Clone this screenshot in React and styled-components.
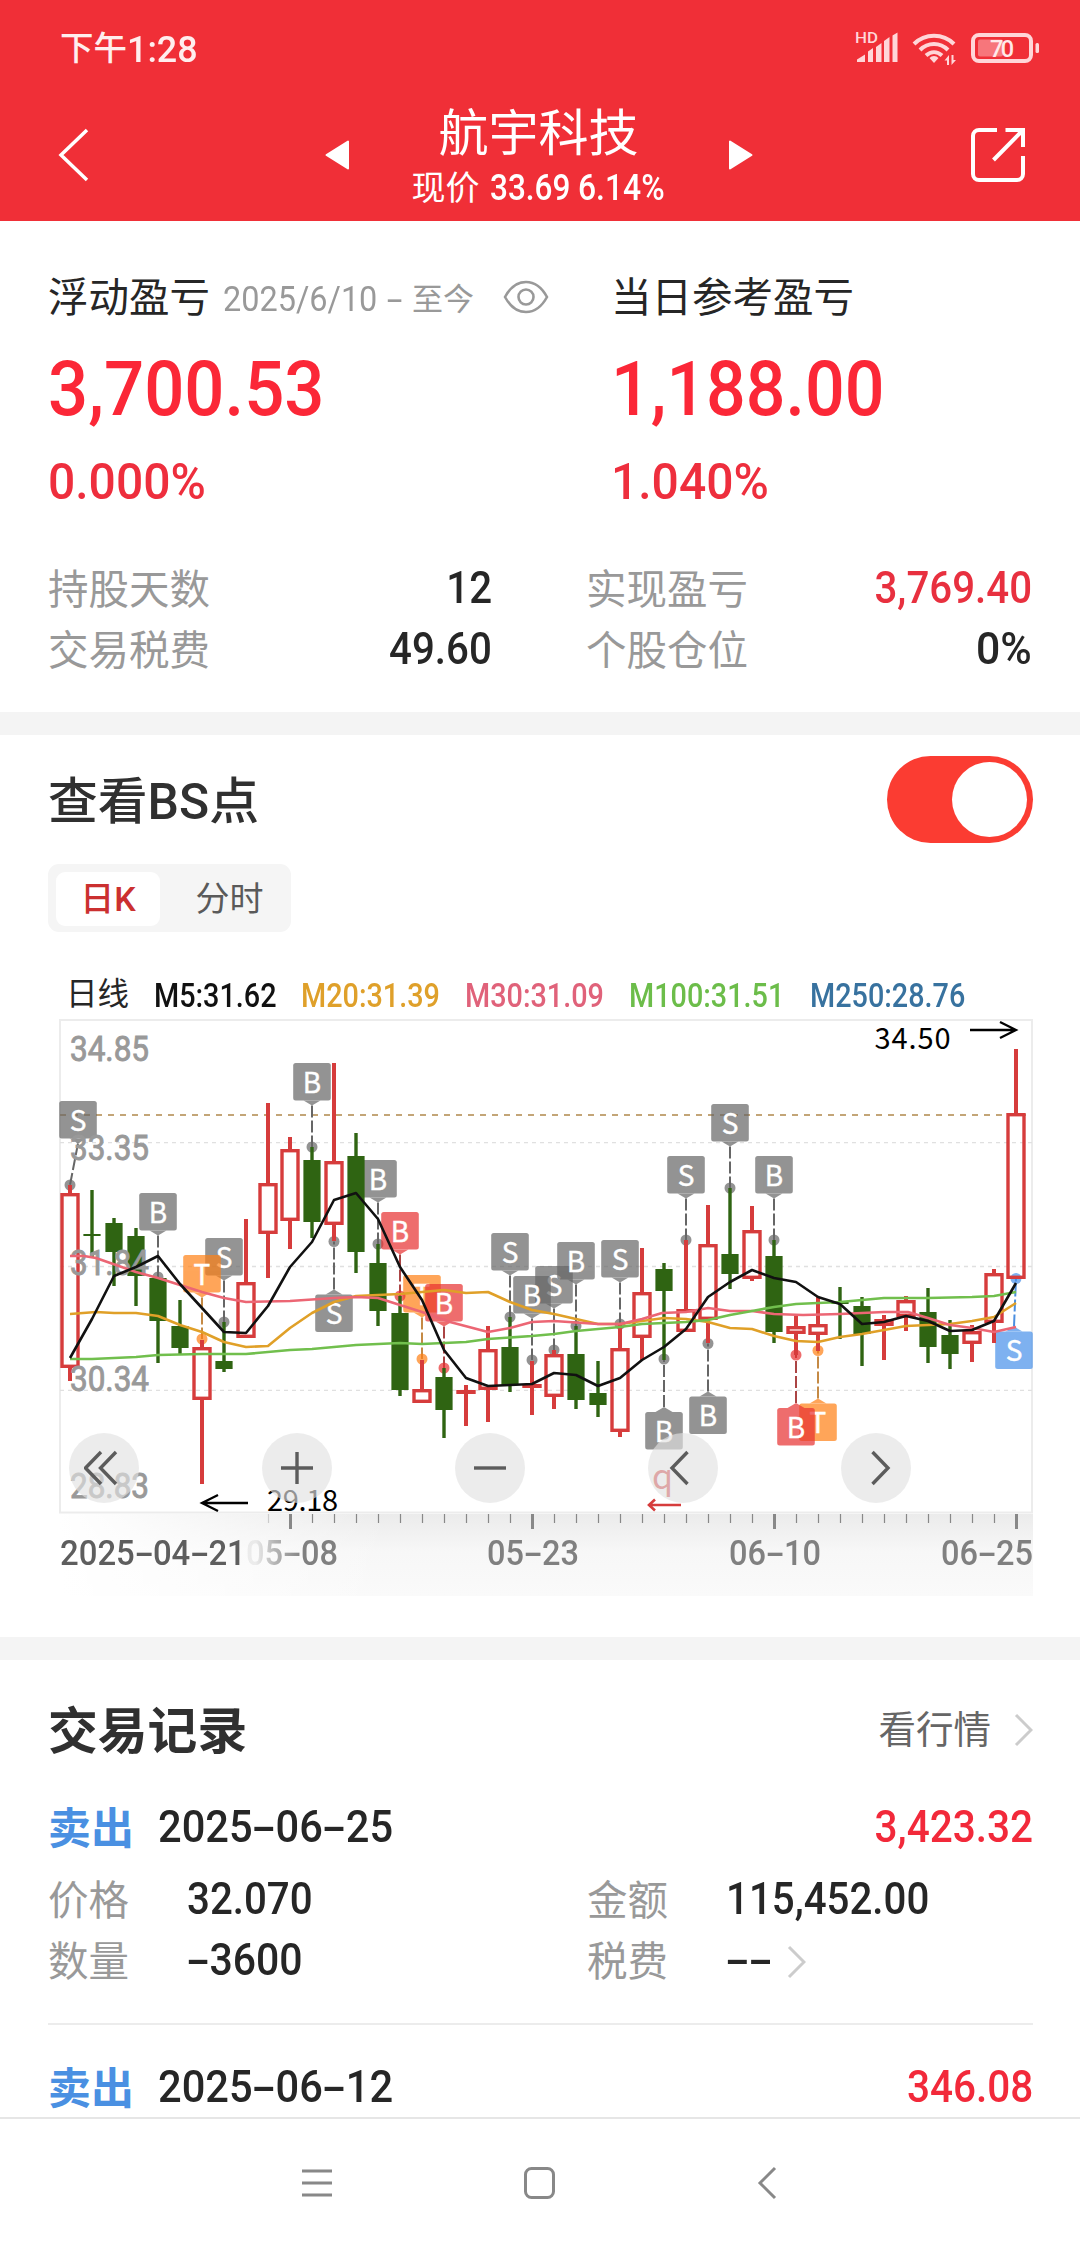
import React from "react";
import styled, { createGlobalStyle, css } from "styled-components";

const GlobalStyle = createGlobalStyle`
  *, *::before, *::after { box-sizing: border-box; }
  body {
    margin: 0;
    background: #fff;
    font-family: Roboto, "Noto Sans CJK SC", sans-serif;
    color: #262626;
  }
  button { border: 0; padding: 0; margin: 0; background: none; font: inherit; color: inherit; display: block; }
`;

const RED = "#f02f37";
const UP = "#d63c3c";
const DOWN = "#2f6412";

const Page = styled.div`
  width: 1080px;
  height: 2248px;
  display: flex;
  flex-direction: column;
  overflow: hidden;
  background: #fff;
`;

/* ---------- shared text ---------- */

const Num = styled.span`
  display: inline-block;
  font-family: Roboto, sans-serif;
  font-size: ${(p) => p.$size || 45}px;
  font-weight: ${(p) => p.$weight || 500};
  line-height: 1;
  white-space: nowrap;
  color: ${(p) => p.$color || "inherit"};
  transform: scaleX(${(p) => p.$sx || 0.895});
  transform-origin: ${(p) => (p.$right ? "right" : "left")} center;
  margin-top: ${(p) => p.$shift || 0}px;
`;

const WideHyphen = styled.span`
  display: inline-block;
  width: 0.55em;
  text-align: center;
  transform: scaleX(1.75);
`;

const DateText = ({ children }) =>
  children.split(/(-)/).map((part, i) =>
    part === "-" ? <WideHyphen key={i}>-</WideHyphen> : <React.Fragment key={i}>{part}</React.Fragment>
  );

/* ---------- header ---------- */

const Header = styled.header`
  background: ${RED};
  color: #fff;
  height: 221px;
  flex: none;
`;

const StatusBar = styled.div`
  height: 96px;
  padding: 0 40px 0 60px;
  display: flex;
  align-items: center;
  justify-content: space-between;
`;

const Clock = styled.div`
  font-size: 33.5px;
  font-weight: 500;
  line-height: 40px;
  padding-top: 2px;
  display: flex;
  align-items: center;
  color: #ffeeee;
`;

const TitleBar = styled.div`
  height: 125px;
  padding: 0 53px 7px 56px;
  display: flex;
  align-items: center;
  justify-content: space-between;
`;

const TitleGroup = styled.div`
  display: flex;
  align-items: center;
  width: 428px;
  margin-left: 18px;
  justify-content: space-between;
`;

const TitleText = styled.div`
  display: flex;
  flex-direction: column;
  align-items: center;
  width: 270px;
  padding-top: 6px;
`;

const StockName = styled.h1`
  margin: 0;
  font-size: 50px;
  line-height: 60px;
  font-weight: 400;
`;

const StockPrice = styled.div`
  display: flex;
  align-items: center;
  width: 254px;
  height: 48px;
  font-size: 34px;
  line-height: 48px;
  white-space: nowrap;
`;

const PriceLabel = styled.span`
  flex: none;
  width: 78px;
`;
const PriceValue = styled.span`
  flex: none;
  width: 88px;
  display: flex;
`;

/* ---------- summary ---------- */

const Section = styled.section`
  flex: none;
  background: #fff;
`;

const Band = styled.div`
  flex: none;
  height: 23px;
  background: #f4f4f4;
`;

const Summary = styled(Section)`
  height: 491px;
  padding: 44px 48px 0;
`;

const ProfitGrid = styled.div`
  display: grid;
  grid-template-columns: 563px 1fr;
`;

const Profit = styled.div`
  display: grid;
  grid-template-rows: 65px 118px 68px;
  align-items: center;
`;

const ProfitTitle = styled.div`
  display: flex;
  align-items: center;
  font-size: 40.5px;
  line-height: 60px;
  white-space: nowrap;
`;

const Period = styled.span`
  display: flex;
  align-items: center;
  width: 267px;
  padding-top: 4px;
  margin-left: 13px;
  margin-right: 13px;
  color: #999;
  font-size: 31px;
`;

const PeriodStart = styled.span`
  flex: none;
  width: 189px;
  display: flex;
`;

const Stats = styled.div`
  margin-top: 43px;
  display: grid;
  grid-template-columns: 444px 446px;
  column-gap: 94px;
`;

const Stat = styled.div`
  height: 61px;
  display: flex;
  align-items: center;
  justify-content: space-between;
`;

const Label = styled.span`
  font-size: 40.5px;
  line-height: 60px;
  color: #999;
  white-space: nowrap;
`;

/* ---------- BS points ---------- */

const BsSection = styled(Section)`
  height: 902px;
  padding-top: 21px;
`;

const BsHead = styled.div`
  height: 87px;
  padding: 0 47px 0 48px;
  display: flex;
  align-items: center;
  justify-content: space-between;
`;

const Heading = styled.h2`
  margin: 4px 0 0;
  font-size: 49.8px;
  line-height: 70px;
  font-weight: ${(p) => p.$weight || 500};
  color: #303030;
`;

const Toggle = styled.button`
  width: 146px;
  height: 87px;
  border-radius: 44px;
  background: #fb3c32;
  display: flex;
  align-items: center;
  justify-content: flex-end;
  padding-right: 6px;
`;

const Knob = styled.span`
  width: 75px;
  height: 75px;
  border-radius: 50%;
  background: #fff;
`;

const Segment = styled.div`
  margin: 21px 0 0 48px;
  width: 243px;
  height: 68px;
  padding: 8px;
  border-radius: 11px;
  background: #f5f5f5;
  display: grid;
  grid-template-columns: 104px 1fr;
`;

const Tab = styled.button`
  font-size: 34px;
  line-height: 54px;
  border-radius: 9px;
  text-align: center;
  color: #5a5a5a;
  padding-left: 16px;
  ${(p) =>
    p.$active &&
    css`
      padding-left: 0;
      background: #fff;
      color: #cb3030;
      font-weight: 500;
    `}
`;

const Legend = styled.div`
  margin-top: 33px;
  height: 50px;
  padding: 10px 0 0 66px;
  display: grid;
  grid-template-columns: 88px 147px 164px 164px 181px 170px;
  align-items: center;
  font-size: 31.5px;
  line-height: 40px;
`;

const Chart = styled.div`
  position: relative;
  height: 499px;
`;

const ChartSvg = styled.svg`
  display: block;
  width: 1080px;
  height: 499px;
  overflow: visible;
`;

const Controls = styled.div`
  position: absolute;
  left: 69px;
  bottom: 11px;
  display: flex;
  gap: 123px;
`;

const Control = styled.button`
  width: 70px;
  height: 70px;
  border-radius: 50%;
  background: rgba(226, 226, 226, 0.65);
  display: flex;
  align-items: center;
  justify-content: center;
`;

const Axis = styled.div`
  margin: 0 47px 0 60px;
  height: 82px;
  background: linear-gradient(to right, #fff 0, rgba(255, 255, 255, 0) 330px),
    linear-gradient(to bottom, #ebebeb, #f7f7f7 45%, #fafafa);
`;

const Ticks = styled.svg`
  display: block;
  width: 973px;
  height: 16px;
`;

const AxisLabels = styled.div`
  display: grid;
  grid-template-columns: 186px 241px 242px 212px 90px;
  margin-top: 5px;
  height: 36px;
  align-items: center;
`;

const AxisLabel = styled.span`
  color: ${(p) => (p.$dark ? "#5e5e5e" : "#808080")};
  ${(p) =>
    p.$faded &&
    css`
      mask-image: linear-gradient(to right, rgba(0, 0, 0, 0.12) 10px, rgba(0, 0, 0, 0.55) 28px, #000 58px);
    `}
`;

/* ---------- records ---------- */

const Records = styled(Section)`
  height: 457px;
  padding: 35px 47px 0 48px;
  overflow: hidden;
`;

const RecordsHead = styled.div`
  height: 70px;
  display: flex;
  align-items: center;
  justify-content: space-between;
`;

const MoreLink = styled.a`
  display: flex;
  align-items: center;
  gap: 23px;
  font-size: 37.5px;
  line-height: 50px;
  color: #666;
`;

const Record = styled.article`
  margin-top: 33px;
  padding-bottom: 31px;
  border-bottom: 2px solid #ececec;
`;

const RecordTop = styled.div`
  height: 62px;
  margin-bottom: 10px;
  display: grid;
  grid-template-columns: 110px 1fr auto;
  align-items: center;
`;

const Side = styled.span`
  font-size: 43px;
  font-weight: 700;
  line-height: 60px;
  color: #4a90e2;
`;

const RecordGrid = styled.div`
  display: grid;
  grid-template-columns: 539px 1fr;
`;

const Field = styled.div`
  height: 61px;
  display: grid;
  grid-template-columns: 139px auto 1fr;
  align-items: center;
`;

const Dashes = styled.span`
  display: flex;
  align-items: center;
  width: 61px;
`;

/* ---------- navigation ---------- */

const NavBar = styled.nav`
  flex: none;
  height: 131px;
  border-top: 2px solid #e6e6e6;
  padding-bottom: 2px;
  display: flex;
  align-items: center;
  justify-content: center;
  gap: 188px;
  background: #fff;
`;

/* ---------- data ---------- */

/* [rising, high, body top, body bottom, low] */
const candles = [
  [1, 185, 193, 368, 381], [0, 190, 234, 236, 257], [0, 218, 223, 252, 286], [0, 228, 236, 276, 306],
  [0, 277, 278, 321, 363], [0, 300, 326, 348, 354], [1, 340, 347, 400, 484], [0, 322, 361, 369, 372],
  [1, 219, 282, 338, 338], [1, 103, 183, 234, 278], [1, 137, 149, 221, 249], [0, 147, 160, 222, 238],
  [1, 63, 161, 225, 241], [0, 133, 156, 252, 273], [0, 244, 263, 311, 326], [0, 296, 313, 390, 396],
  [1, 360, 389, 403, 403], [0, 368, 377, 410, 438], [1, 385, 390, 394, 426], [1, 326, 349, 390, 422],
  [0, 317, 347, 385, 392], [1, 361, 384, 388, 415], [1, 350, 354, 397, 409], [0, 326, 354, 400, 409],
  [0, 361, 393, 405, 417], [1, 323, 348, 432, 437], [1, 248, 292, 338, 360], [0, 263, 269, 291, 360],
  [1, 240, 309, 332, 332], [1, 205, 244, 320, 343], [0, 188, 254, 274, 289], [1, 206, 230, 279, 281],
  [0, 240, 256, 332, 343], [1, 316, 326, 334, 355], [1, 297, 324, 335, 351], [0, 287, 302, 304, 339],
  [0, 297, 306, 334, 366], [1, 315, 319, 326, 360], [1, 296, 300, 317, 331], [0, 288, 312, 347, 363],
  [0, 320, 335, 354, 369], [1, 325, 331, 344, 362], [1, 269, 273, 323, 343], [1, 49, 113, 279, 279],
];

const cx = (i) => 70 + 22 * i;

const averages = [
  {
    color: "#e0a028",
    points:
      "70,314 96,312 114,313 136,313 158,316 180,325 202,332 224,342 246,347 268,346 290,328 312,313 334,302 356,296 378,295 400,294 422,292 444,290 466,293 488,292 510,302 532,310 554,314 576,319 598,324 620,324 642,321 664,318 686,319 708,322 730,328 752,329 774,336 796,341 818,342 840,337 862,334 906,326 950,324 972,321 994,317 1016,303",
  },
  {
    color: "#ec6674",
    points:
      "70,256 84,256 96,258 136,272 158,278 180,285 202,292 224,298 246,302 290,301 334,298 356,297 378,298 400,305 422,312 450,322 488,332 510,328 532,322 554,321 598,324 620,324 642,319 662,313 686,312 708,308 730,311 752,311 774,314 803,315 840,314 884,312 908,312 928,318 950,325 972,328 994,332 1016,327",
  },
  {
    color: "#71bf4d",
    points:
      "70,359 92,359 136,357 158,355 202,354 246,354 290,350 312,349 356,345 400,343 422,344 466,342 488,339 532,336 554,334 576,331 620,327 642,324 664,323 686,322 708,320 730,315 752,311 774,307 796,304 840,302 884,298 928,298 972,297 994,296 1016,292",
  },
  {
    color: "#111",
    points:
      "70,358 92,319 114,276 136,267 158,256 180,284 202,308 224,332 246,333 268,306 290,267 312,242 334,200 356,193 378,219 400,267 422,300 444,350 466,378 488,386 510,385 532,384 554,373 576,375 598,386 620,378 642,360 664,347 686,329 708,297 730,282 752,270 774,278 796,282 818,297 840,304 862,324 884,322 906,316 928,321 950,331 972,330 994,321 1016,283",
  },
];

const tones = {
  gray: { fill: "rgb(102,102,102)", line: "#666" },
  orange: { fill: "rgb(255,128,20)", line: "#c58a45" },
  red: { fill: "rgb(232,48,48)", line: "#ab4444" },
  blue: { fill: "rgb(72,145,235)", line: "#4a8ee0" },
};

/* [letter, tone, candle, box top, below, box centre override] */
const markers = [
  ["S", "gray", 0, 101, 0, 78], ["B", "gray", 4, 193, 0], ["S", "gray", 7, 238, 0], ["B", "gray", 11, 63, 0],
  ["S", "gray", 12, 294.5, 1], ["B", "gray", 14, 160, 0], ["S", "gray", 20, 233, 0], ["S", "gray", 22, 266, 0],
  ["B", "gray", 21, 276, 0], ["B", "gray", 23, 242, 0], ["S", "gray", 25, 240, 0], ["B", "gray", 27, 412, 1],
  ["S", "gray", 28, 156, 0], ["B", "gray", 29, 396.5, 1], ["S", "gray", 30, 104, 0], ["B", "gray", 32, 156, 0],
  ["T", "orange", 6, 255, 0], ["T", "orange", 16, 275, 0], ["T", "orange", 34, 403.5, 1],
  ["B", "red", 15, 212, 0], ["B", "red", 17, 284, 0], ["B", "red", 33, 408, 1],
  ["S", "blue", 43, 331.5, 1, 1014],
];

const prices = [["34.85", 61.3], ["33.35", 160.4], ["31.84", 275.4], ["30.34", 391], ["28.83", 498]];

const legend = [
  ["M5:31.62", "#111"], ["M20:31.39", "#dfa02a"], ["M30:31.09", "#e0627a"],
  ["M100:31.51", "#6cbd4a"], ["M250:28.76", "#38729f"],
];

/* ---------- chart parts ---------- */

function Candle({ data, index }) {
  const [rising, high, top, bottom, low] = data;
  const x = cx(index);
  const color = rising ? UP : DOWN;
  const flat = bottom - top < 7;
  return (
    <g stroke={color} strokeWidth={rising ? 4 : 3.4}>
      {high < top && <line x1={x} x2={x} y1={high} y2={top + 1} />}
      {low > bottom && <line x1={x} x2={x} y1={bottom - 1} y2={low} />}
      {flat && <line x1={x} x2={x} y1={top} y2={bottom} />}
      {rising && !flat ? (
        <rect x={x - 8} y={top + 1.7} width={16} height={bottom - top - 3.4} fill="none" strokeWidth={3.4} />
      ) : (
        <rect
          x={x - (rising ? 9.7 : 8.6)}
          y={top}
          width={rising ? 19.4 : 17.2}
          height={bottom - top}
          fill={color}
          stroke="none"
        />
      )}
    </g>
  );
}

function Marker({ data }) {
  const [letter, tone, index, top, below, override] = data;
  const x = cx(index);
  const bx = override || x;
  const { fill, line } = tones[tone];
  const dot = below ? top - 53 : top + 84;
  const tip = below ? top - 5 : top + 42.5;
  const base = below ? top : top + 37.5;
  return (
    <g>
      <line x1={bx} y1={tip} x2={x} y2={dot} stroke={line} strokeWidth="2" strokeDasharray="12 3" />
      <g fill={fill} opacity="0.7">
        <rect x={bx - 18.8} y={top} width="37.6" height="37.5" rx="2.5" />
        <polygon points={`${bx - 8.5},${base} ${bx + 8.5},${base} ${bx},${tip}`} />
        <circle cx={x} cy={dot} r="5.5" />
      </g>
      <text
        x={bx}
        y={top + 29.5}
        textAnchor="middle"
        fontFamily="'Noto Sans CJK SC', sans-serif"
        fontSize="28"
        fill="#fff"
        stroke="#fff"
        strokeWidth="0.4"
      >
        {letter}
      </text>
    </g>
  );
}

function KLineChart() {
  return (
    <ChartSvg viewBox="0 15 1080 499">
      <rect x="60" y="20" width="972" height="492.5" fill="none" stroke="#ececec" strokeWidth="2" />
      {[142.7, 266.5, 390.3].map((y) => (
        <line key={y} x1="60" x2="1032" y1={y} y2={y} stroke="#e0e0e0" strokeWidth="1.3" strokeDasharray="4 4" />
      ))}
      <line x1="60" x2="1032" y1="115" y2="115" stroke="#c3a577" strokeWidth="2" strokeDasharray="6 6" />
      {markers.map((m, i) => (
        <Marker key={i} data={m} />
      ))}
      {candles.map((c, i) => (
        <Candle key={i} data={c} index={i} />
      ))}
      {prices.map(([text, y]) => (
        <text
          key={text}
          x="70"
          y={y}
          fontFamily="Roboto, sans-serif"
          fontSize="34.5"
          fill="#999"
          stroke="#999"
          strokeWidth="0.9"
          textLength="79"
          lengthAdjust="spacingAndGlyphs"
        >
          {text}
        </text>
      ))}
      {averages.map((a) => (
        <polyline key={a.color} points={a.points} fill="none" stroke={a.color} strokeWidth="2.6" strokeLinejoin="round" />
      ))}
      <g fontFamily="'Noto Sans CJK SC', sans-serif" fontSize="29" fill="#000">
        <text x="874.5" y="49" textLength="76">34.50</text>
        <text x="267" y="510.7" textLength="71">29.18</text>
      </g>
      <g fill="none" stroke="#000" strokeWidth="2.3">
        <path d="M970 30h45M1000 22l16 8-16 8" />
        <path d="M248 503h-45M218 495l-16 8 16 8" />
      </g>
      <text x="652" y="489" fontFamily="'Noto Sans CJK SC', sans-serif" fontSize="34" fill="#d63c3c">
        q
      </text>
      <path d="M681 505h-31M655 499.500l-6 5.500 6 5.500" fill="none" stroke="#d63c3c" strokeWidth="2.6" />
    </ChartSvg>
  );
}

const controlIcons = [
  "M17 4L1.500 20 17 36M32 4L16.500 20 32 36",
  "M4 20h32M20 4v32",
  "M4 20h32",
  "M24.500 4L9 20l15.500 16",
  "M16.500 4L32 20 16.500 36",
];

const ChevronRight = () => (
  <svg width="19" height="34" viewBox="0 0 19 34" fill="none" stroke="#ccc" strokeWidth="3">
    <path d="M2 2l15 15L2 32" />
  </svg>
);

function StatusIcons() {
  return (
    <svg width="190" height="40" viewBox="852 27 190 40">
      <g fill="#ffd6d8">
        <text x="857" y="42" fontFamily="Roboto, sans-serif" fontSize="15.500" fontWeight="500" textLength="23" lengthAdjust="spacingAndGlyphs">
          HD
        </text>
        <path d="M859 61v-2.500l8-5V61zM870 61v-10.500l5-3.500V61zM878 61V46l5.500-4V61zM886 61V40l5.500-4V61zM894.500 61V34.500l5-3V61z" />
        <path d="M936 62l-4.500-5a6 6 0 0 1 9 0z" />
        <path d="M951 64V54l-4.500 5.500h2.500V64zM953.500 54v10l4.500-5h-2.500v-5z" />
        <rect x="1037.500" y="42" width="3.500" height="10" rx="1.500" />
      </g>
      <g fill="none" stroke="#ffd6d8" strokeWidth="4">
        <path d="M916 43c11-11 29-11 40 0" />
        <path d="M922 49c8-8 20-8 28 0" />
        <path d="M928 54.500c5-4.500 11-4.500 16 0" />
        <rect x="975" y="34" width="58" height="26" rx="6" />
      </g>
      <rect x="980" y="38.500" width="25" height="17" rx="2" fill="#f7767b" />
      <text x="992" y="56" fontFamily="Roboto, sans-serif" fontSize="23.500" fontWeight="500" fill="#ffe9e9" textLength="24">
        70
      </text>
    </svg>
  );
}

function TradeHead({ date, amount }) {
  return (
    <RecordTop>
      <Side>卖出</Side>
      <Num $sx={0.925} $weight={500} $shift={-6}>
        <DateText>{date}</DateText>
      </Num>
      <Num $sx={0.9} $right $shift={-6} $color="#f2293a">
        {amount}
      </Num>
    </RecordTop>
  );
}

/* ---------- page ---------- */

export default function App() {
  return (
    <Page>
      <GlobalStyle />
      <Header>
        <StatusBar>
          <Clock>
            下午<Num $size={37} $sx={0.97}>1:28</Num>
          </Clock>
          <StatusIcons />
        </StatusBar>
        <TitleBar>
          <svg width="34" height="56" viewBox="0 0 34 56" fill="none" stroke="#fff" strokeWidth="3.500">
            <path d="M31 3L5 28l26 25" />
          </svg>
          <TitleGroup>
            <svg width="24" height="30" viewBox="0 0 24 30" fill="#fff" stroke="#fff" strokeWidth="2" strokeLinejoin="round">
              <path d="M23 1.500v27L1.500 15z" />
            </svg>
            <TitleText>
              <StockName>航宇科技</StockName>
              <StockPrice>
                <PriceLabel>现价</PriceLabel>
                <PriceValue>
                  <Num $size={36} $sx={0.875}>33.69</Num>
                </PriceValue>
                <Num $size={36} $sx={0.885}>6.14%</Num>
              </StockPrice>
            </TitleText>
            <svg width="24" height="30" viewBox="0 0 24 30" fill="#fff" stroke="#fff" strokeWidth="2" strokeLinejoin="round">
              <path d="M1 1.500v27L22.500 15z" />
            </svg>
          </TitleGroup>
          <svg width="58" height="56" viewBox="0 0 58 56" fill="none" stroke="#fff" strokeWidth="4">
            <path d="M28 3H10a6 6 0 0 0-6 6v38a6 6 0 0 0 6 6h38a6 6 0 0 0 6-6V29" />
            <path d="M36.500 3H54v17M24.500 33L53 4" />
          </svg>
        </TitleBar>
      </Header>

      <Summary>
        <ProfitGrid>
          <Profit>
            <ProfitTitle>
              浮动盈亏
              <Period>
                <PeriodStart>
                  <Num $size={34.5} $sx={0.94} $weight={400}>
                    2025/6/10 <WideHyphen>-</WideHyphen>
                  </Num>
                </PeriodStart>
                至今
              </Period>
              <svg width="46" height="36" viewBox="0 0 46 36" fill="none" stroke="#999" strokeWidth="2.600">
                <path d="M2 17C8 6 15 2 23 2s15 4 21 15c-6 11-13 15-21 15S8 28 2 17z" />
                <circle cx="23" cy="17" r="7.500" />
              </svg>
            </ProfitTitle>
            <Num $size={76} $sx={0.93} $color="#fb2737">3,700.53</Num>
            <Num $size={50} $sx={0.96} $color="#ee2e3d">0.000%</Num>
          </Profit>
          <Profit>
            <ProfitTitle>当日参考盈亏</ProfitTitle>
            <Num $size={76} $sx={0.92} $color="#fb2737">1,188.00</Num>
            <Num $size={50} $sx={0.96} $color="#ee2e3d">1.040%</Num>
          </Profit>
        </ProfitGrid>
        <Stats>
          <Stat>
            <Label>持股天数</Label>
            <Num $right $shift={-5}>12</Num>
          </Stat>
          <Stat>
            <Label>实现盈亏</Label>
            <Num $right $shift={-5} $color="#e8303f">3,769.40</Num>
          </Stat>
          <Stat>
            <Label>交易税费</Label>
            <Num $right $shift={-5}>49.60</Num>
          </Stat>
          <Stat>
            <Label>个股仓位</Label>
            <Num $right $sx={0.95} $shift={-5}>0%</Num>
          </Stat>
        </Stats>
      </Summary>

      <Band />

      <BsSection>
        <BsHead>
          <Heading>查看BS点</Heading>
          <Toggle>
            <Knob />
          </Toggle>
        </BsHead>
        <Segment>
          <Tab $active>日K</Tab>
          <Tab>分时</Tab>
        </Segment>
        <Legend>
          <span>日线</span>
          {legend.map(([text, color]) => (
            <Num key={text} $size={33} $sx={0.872} $color={color}>
              {text}
            </Num>
          ))}
        </Legend>
        <Chart>
          <KLineChart />
          <Controls>
            {controlIcons.map((d) => (
              <Control key={d}>
                <svg width="40" height="40" viewBox="0 0 40 40" fill="none" stroke="#5c5c5c" strokeWidth="3.400">
                  <path d={d} />
                </svg>
              </Control>
            ))}
          </Controls>
        </Chart>
        <Axis>
          <Ticks viewBox="60 0 973 16">
            {candles.map((_, i) => {
              if (i < 9) return null;
              const major = i % 11 === 10;
              return (
                <line
                  key={i}
                  x1={cx(i) + 0.5}
                  x2={cx(i) + 0.5}
                  y1="0"
                  y2={major ? 15 : 9}
                  stroke={i === 9 ? "#ccc" : "#888"}
                  strokeWidth={major ? 3 : 1.2}
                />
              );
            })}
          </Ticks>
          <AxisLabels>
            {["2025-04-21", "05-08", "05-23", "06-10", "06-25"].map((d, i) => (
              <AxisLabel key={d} $dark={i === 0} $faded={i === 1}>
                <Num $size={35} $sx={i === 0 ? 0.94 : 0.93} $weight={500}>
                  <DateText>{d}</DateText>
                </Num>
              </AxisLabel>
            ))}
          </AxisLabels>
        </Axis>
      </BsSection>

      <Band />

      <Records>
        <RecordsHead>
          <Heading $weight={700}>交易记录</Heading>
          <MoreLink>
            看行情
            <ChevronRight />
          </MoreLink>
        </RecordsHead>
        <Record>
          <TradeHead date="2025-06-25" amount="3,423.32" />
          <RecordGrid>
            <Field>
              <Label>价格</Label>
              <Num $shift={-5}>32.070</Num>
            </Field>
            <Field>
              <Label>金额</Label>
              <Num $shift={-5}>115,452.00</Num>
            </Field>
            <Field>
              <Label>数量</Label>
              <Num $shift={-5} $sx={0.91}>
                <DateText>-3600</DateText>
              </Num>
            </Field>
            <Field>
              <Label>税费</Label>
              <Dashes>
                <Num $shift={-5} $sx={0.93}>
                  <DateText>--</DateText>
                </Num>
              </Dashes>
              <ChevronRight />
            </Field>
          </RecordGrid>
        </Record>
        <Record>
          <TradeHead date="2025-06-12" amount="346.08" />
        </Record>
      </Records>

      <NavBar>
        <svg width="36" height="36" viewBox="0 0 36 36" fill="none" stroke="#888" strokeWidth="3">
          <path d="M4 6h30M4 18h30M4 30h30" />
        </svg>
        <svg width="36" height="36" viewBox="0 0 36 36" fill="none" stroke="#888" strokeWidth="3">
          <rect x="3.500" y="3.500" width="28" height="29" rx="6" />
        </svg>
        <svg width="36" height="36" viewBox="0 0 36 36" fill="none" stroke="#888" strokeWidth="3">
          <path d="M29 3L14 18l15 15" />
        </svg>
      </NavBar>
    </Page>
  );
}
